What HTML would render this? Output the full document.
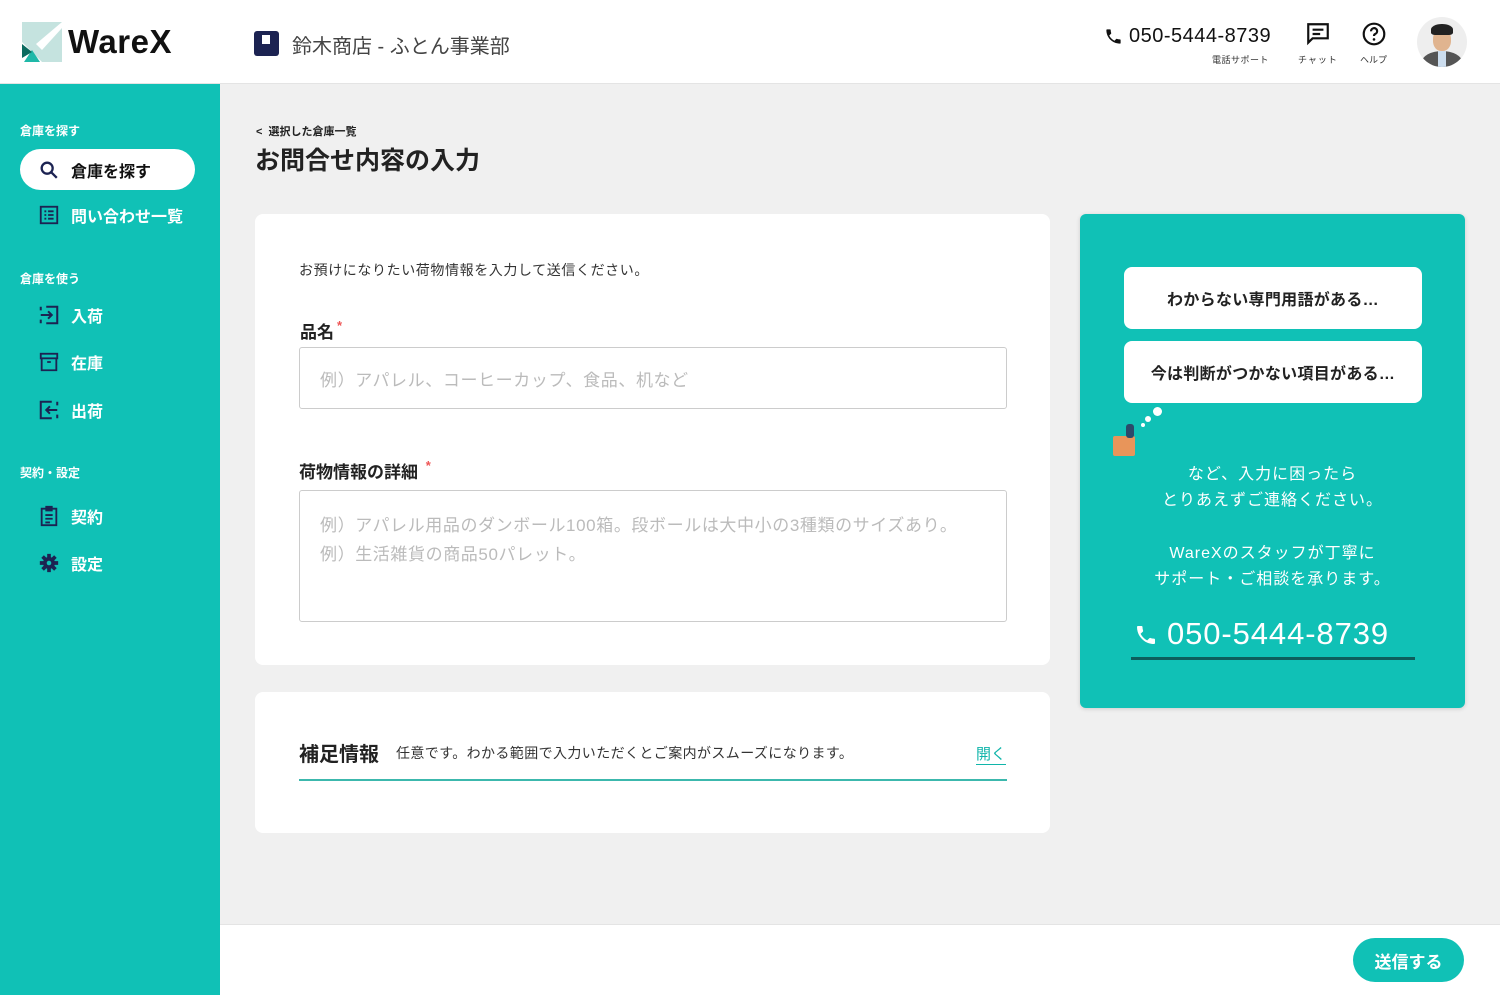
<!DOCTYPE html>
<html><head><meta charset="utf-8"><style>
*{box-sizing:border-box;margin:0;padding:0}
body{width:1500px;height:995px;overflow:hidden;background:#f0f0f0;font-family:"Liberation Sans","Noto Sans CJK JP",sans-serif;color:#222;position:relative}
.hdr{position:absolute;left:0;top:0;width:1500px;height:84px;background:#fff;border-bottom:1px solid #e4e4e4}
.side{position:absolute;left:0;top:84px;width:220px;height:911px;background:#10c1b6}
.sec{position:absolute;left:20px;font-size:12px;font-weight:bold;color:#fff}
.item{position:absolute;left:38px;font-size:16px;font-weight:bold;color:#fff;display:flex;align-items:center;gap:11px}
.item svg{width:22px;height:22px}
.card{position:absolute;background:#fff;border-radius:8px}
.lbl{position:absolute;font-size:17px;font-weight:bold;color:#222}
.req{color:#e55;font-size:13px;vertical-align:top;margin-left:3px}
.inp{position:absolute;border:1px solid #ccc;border-radius:3px;color:#bbb;font-size:17px;letter-spacing:0.6px}
.bubble{position:absolute;left:1124px;width:298px;height:62px;background:#fff;border-radius:8px;font-size:16px;font-weight:bold;display:flex;align-items:center;justify-content:center;color:#222;letter-spacing:0.3px}
.wt{position:absolute;left:1080px;width:385px;text-align:center;color:#fff;font-size:16px;line-height:26px;letter-spacing:1px}
</style></head><body>
<div class="hdr">
 <svg style="position:absolute;left:22px;top:22px" width="40" height="40" viewBox="0 0 40 40"><rect x="0" y="0" width="40" height="40" fill="#c5e3df"/><polygon points="0,20 0,40 20,40" fill="#fff"/><polygon points="10,28 18,40 2,40" fill="#1fb8a8"/><polygon points="0,22 10,30 0,36" fill="#0a6b5f"/><polygon points="14,22 40,0 40,6 20,28" fill="#fff"/></svg>
 <div style="position:absolute;left:68px;top:23px;font-size:33px;font-weight:bold;color:#111;letter-spacing:0.5px">WareX</div>
 <div style="position:absolute;left:254px;top:31px;width:25px;height:25px;background:#1c2352;border-radius:3px"><div style="position:absolute;left:8px;top:4px;width:8px;height:9px;background:#fff"></div></div>
 <div style="position:absolute;left:292px;top:30px;font-size:20px;color:#444">鈴木商店 - ふとん事業部</div>
 <svg style="position:absolute;left:1104px;top:27px" width="19" height="19" viewBox="0 0 24 24"><path fill="#111" d="M6.6 10.8c1.4 2.8 3.8 5.1 6.6 6.6l2.2-2.2c.3-.3.7-.4 1-.2 1.1.4 2.3.6 3.6.6.6 0 1 .4 1 1V20c0 .6-.4 1-1 1C10.6 21 3 13.4 3 4c0-.6.4-1 1-1h3.5c.6 0 1 .4 1 1 0 1.3.2 2.5.6 3.6.1.3 0 .7-.2 1z"/></svg>
 <div style="position:absolute;left:1129px;top:25px;font-size:20px;color:#111;letter-spacing:0.5px">050-5444-8739</div>
 <div style="position:absolute;left:1212px;top:53px;font-size:9px;color:#333;letter-spacing:0.5px">電話サポート</div>
 <svg style="position:absolute;left:1305px;top:21px" width="26" height="26" viewBox="0 0 24 24"><path fill="none" stroke="#111" stroke-width="2" d="M3 3h18v13H7l-4 4z"/><path stroke="#111" stroke-width="2" d="M7 8h10M7 12h7"/></svg>
 <div style="position:absolute;left:1298px;top:53px;font-size:9px;color:#333;letter-spacing:1px">チャット</div>
 <svg style="position:absolute;left:1361px;top:21px" width="26" height="26" viewBox="0 0 24 24"><circle cx="12" cy="12" r="9.5" fill="none" stroke="#111" stroke-width="2"/><path d="M9.3 9.5a2.8 2.8 0 1 1 3.8 2.5c-.8.4-1.1.9-1.1 1.8" fill="none" stroke="#111" stroke-width="2"/><circle cx="12" cy="17" r="1.2" fill="#111"/></svg>
 <div style="position:absolute;left:1360px;top:53px;font-size:9px;color:#333">ヘルプ</div>
 <div style="position:absolute;left:1417px;top:17px;width:50px;height:50px;border-radius:50%;background:#eee;overflow:hidden">
  <div style="position:absolute;left:5px;top:34px;width:40px;height:22px;border-radius:50% 50% 0 0;background:#555"></div>
  <div style="position:absolute;left:21px;top:34px;width:8px;height:16px;background:#cde"></div>
  <div style="position:absolute;left:16px;top:12px;width:18px;height:22px;border-radius:45%;background:#e0b48f"></div>
  <div style="position:absolute;left:14px;top:7px;width:22px;height:11px;border-radius:50% 50% 20% 20%;background:#222"></div>
 </div>
</div>
<div class="side">
 <div class="sec" style="top:38px">倉庫を探す</div>
 <div style="position:absolute;left:20px;top:65px;width:175px;height:41px;background:#fff;border-radius:21px"></div>
 <div class="item" style="top:74px;color:#111"><svg viewBox="0 0 24 24"><circle cx="10" cy="10" r="6" fill="none" stroke="#1c2352" stroke-width="2.5"/><path d="M14.5 14.5l6 6" stroke="#1c2352" stroke-width="2.5"/></svg>倉庫を探す</div>
 <div class="item" style="top:119px"><svg viewBox="0 0 24 24"><rect x="3" y="3" width="18" height="18" fill="none" stroke="#1c2352" stroke-width="2"/><path d="M7 8h2M11 8h6M7 12h2M11 12h6M7 16h2M11 16h6" stroke="#1c2352" stroke-width="2"/></svg>問い合わせ一覧</div>
 <div class="sec" style="top:186px">倉庫を使う</div>
 <div class="item" style="top:219px"><svg viewBox="0 0 24 24"><path d="M9 3h12v18H9M3 12h12M11 8l4 4-4 4M3 3v4M3 17v4" fill="none" stroke="#1c2352" stroke-width="2.2"/></svg>入荷</div>
 <div class="item" style="top:266px"><svg viewBox="0 0 24 24"><rect x="3" y="3" width="18" height="5" fill="none" stroke="#1c2352" stroke-width="2"/><path d="M4 8v13h16V8M10 12h4" fill="none" stroke="#1c2352" stroke-width="2"/></svg>在庫</div>
 <div class="item" style="top:314px"><svg viewBox="0 0 24 24"><path d="M15 3H3v18h12M21 12H9M13 8l-4 4 4 4M21 3v4M21 17v4" fill="none" stroke="#1c2352" stroke-width="2.2"/></svg>出荷</div>
 <div class="sec" style="top:380px">契約・設定</div>
 <div class="item" style="top:420px"><svg viewBox="0 0 24 24"><path d="M4 4h16v18H4zM9 2h6v4H9zM8 11h8M8 15h8M8 19h5" fill="none" stroke="#1c2352" stroke-width="2"/></svg>契約</div>
 <div class="item" style="top:467px"><svg viewBox="0 0 24 24"><circle cx="12" cy="12" r="6.5" fill="#1c2352"/><path d="M12 2v20M2 12h20M5 5l14 14M19 5L5 19" stroke="#1c2352" stroke-width="4"/><circle cx="12" cy="12" r="2.5" fill="#10c1b6"/></svg>設定</div>
</div>
<div style="position:absolute;left:256px;top:123px;font-size:11px;font-weight:bold">&lt;&nbsp; 選択した倉庫一覧</div>
<div style="position:absolute;left:255px;top:141px;font-size:25px;font-weight:bold;color:#222">お問合せ内容の入力</div>
<div class="card" style="left:255px;top:214px;width:795px;height:451px"></div>
<div style="position:absolute;left:299px;top:260px;font-size:14px;color:#333;letter-spacing:0.6px">お預けになりたい荷物情報を入力して送信ください。</div>
<div class="lbl" style="left:300px;top:318px">品名<span class="req">*</span></div>
<div class="inp" style="left:299px;top:347px;width:708px;height:62px;padding:18px 20px">例）アパレル、コーヒーカップ、食品、机など</div>
<div class="lbl" style="left:299px;top:458px">荷物情報の詳細 <span class="req">*</span></div>
<div class="inp" style="left:299px;top:490px;width:708px;height:132px;padding:20px 20px;line-height:29px">例）アパレル用品のダンボール100箱。段ボールは大中小の3種類のサイズあり。<br>例）生活雑貨の商品50パレット。</div>
<div class="card" style="left:255px;top:692px;width:795px;height:141px"></div>
<div style="position:absolute;left:299px;top:738px;font-size:20px;font-weight:bold">補足情報</div>
<div style="position:absolute;left:396px;top:743px;font-size:14px;color:#333;letter-spacing:0.4px">任意です。わかる範囲で入力いただくとご案内がスムーズになります。</div>
<div style="position:absolute;left:976px;top:743px;font-size:15px;color:#10b5aa;border-bottom:1px solid #10b5aa">開く</div>
<div style="position:absolute;left:299px;top:779px;width:708px;height:2px;background:#3cb8ad"></div>
<div style="position:absolute;left:1080px;top:214px;width:385px;height:494px;background:#10c1b6;border-radius:6px;box-shadow:0 1px 4px rgba(0,0,0,.15)"></div>
<div class="bubble" style="top:267px">わからない専門用語がある…</div>
<div class="bubble" style="top:341px">今は判断がつかない項目がある…</div>
<div style="position:absolute;left:1153px;top:407px;width:9px;height:9px;border-radius:50%;background:#fff"></div>
<div style="position:absolute;left:1145px;top:416px;width:6px;height:6px;border-radius:50%;background:#fff"></div>
<div style="position:absolute;left:1141px;top:423px;width:4px;height:4px;border-radius:50%;background:#fff"></div>
<div style="position:absolute;left:1113px;top:436px;width:22px;height:20px;background:#e8955a;border-radius:2px"></div>
<div style="position:absolute;left:1126px;top:424px;width:8px;height:14px;background:#2b4a6a;border-radius:3px"></div>
<div class="wt" style="top:462px">など、入力に困ったら<br>とりあえずご連絡ください。</div>
<div class="wt" style="top:541px">WareXのスタッフが丁寧に<br>サポート・ご相談を承ります。</div>
<svg style="position:absolute;left:1134px;top:623px" width="24" height="24" viewBox="0 0 24 24"><path fill="#fff" d="M6.6 10.8c1.4 2.8 3.8 5.1 6.6 6.6l2.2-2.2c.3-.3.7-.4 1-.2 1.1.4 2.3.6 3.6.6.6 0 1 .4 1 1V20c0 .6-.4 1-1 1C10.6 21 3 13.4 3 4c0-.6.4-1 1-1h3.5c.6 0 1 .4 1 1 0 1.3.2 2.5.6 3.6.1.3 0 .7-.2 1z"/></svg>
<div style="position:absolute;left:1167px;top:616px;font-size:31px;color:#fff;letter-spacing:0.9px">050-5444-8739</div>
<div style="position:absolute;left:1131px;top:657px;width:284px;height:3px;background:#0c5e5c"></div>
<div style="position:absolute;left:220px;top:924px;width:1280px;height:71px;background:#fff;border-top:1px solid #e4e4e4"></div>
<div style="position:absolute;left:1353px;top:938px;width:111px;height:44px;background:#10c1b6;border-radius:22px;color:#fff;font-size:17px;font-weight:bold;display:flex;align-items:center;justify-content:center">送信する</div>
</body></html>
